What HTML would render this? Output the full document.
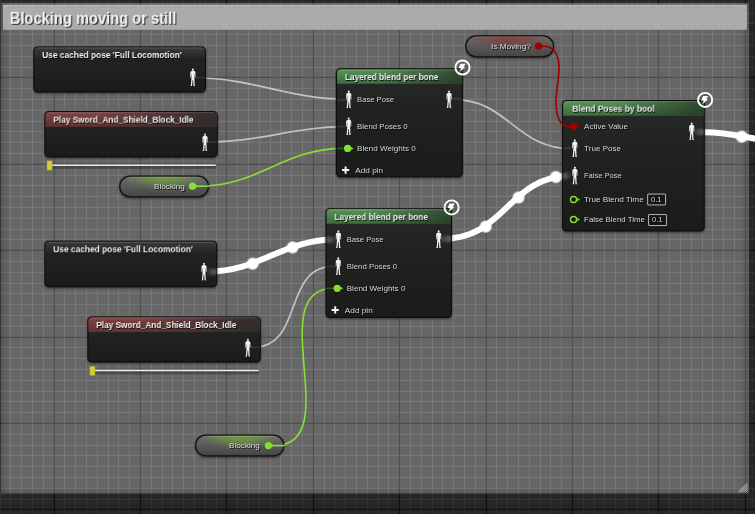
<!DOCTYPE html>
<html lang="en"><head><meta charset="utf-8"><title>Blocking moving or still</title>
<style>
html,body{margin:0;padding:0;background:#262626;}
body{width:755px;height:514px;overflow:hidden;position:relative;font-family:"Liberation Sans",sans-serif;}
svg.scene{position:absolute;left:0;top:0;display:block;}
.t{position:absolute;left:0;top:0;white-space:nowrap;transform-origin:0 0;display:block;will-change:transform;}
.t.lb{text-shadow:0.8px 0.8px 0.6px rgba(0,0,0,0.9);}
.t.ti{font-weight:bold;text-shadow:0.8px 0.8px 0.6px rgba(0,0,0,0.9);}
.t.hd{font-weight:bold;text-shadow:1.3px 1.3px 0.5px rgba(40,40,40,0.95);}
</style></head>
<body>
<svg class="scene" width="755" height="514" viewBox="0 0 755 514">
<defs>
<clipPath id="cb"><rect x="1.0" y="3.0" width="748.0" height="490.5"/></clipPath>
<linearGradient id="edgeL" x1="0" x2="1" y1="0" y2="0"><stop offset="0" stop-color="#000" stop-opacity="0.16"/><stop offset="1" stop-color="#000" stop-opacity="0"/></linearGradient>
<linearGradient id="edgeR" x1="1" x2="0" y1="0" y2="0"><stop offset="0" stop-color="#000" stop-opacity="0.14"/><stop offset="1" stop-color="#000" stop-opacity="0"/></linearGradient>
<linearGradient id="edgeB" x1="0" x2="0" y1="1" y2="0"><stop offset="0" stop-color="#000" stop-opacity="0.14"/><stop offset="1" stop-color="#000" stop-opacity="0"/></linearGradient>
<radialGradient id="bub"><stop offset="0" stop-color="#fff"/><stop offset="0.68" stop-color="#fff"/><stop offset="1" stop-color="#fff" stop-opacity="0"/></radialGradient>
<filter id="sh" x="-10%" y="-20%" width="120%" height="140%"><feGaussianBlur stdDeviation="0.9"/></filter>
<filter id="b1" x="-30%" y="-60%" width="160%" height="220%"><feGaussianBlur stdDeviation="0.8"/></filter>
<linearGradient id="gBody" x1="0" x2="0" y1="0" y2="1"><stop offset="0" stop-color="#282a28"/><stop offset="0.35" stop-color="#212321"/><stop offset="1" stop-color="#1a1c1a"/></linearGradient>
<linearGradient id="gGray" x1="0" x2="0" y1="0" y2="1"><stop offset="0" stop-color="#484848"/><stop offset="0.14" stop-color="#363636"/><stop offset="1" stop-color="#1e1e1e"/></linearGradient>
<linearGradient id="gRed" x1="0" x2="0" y1="0" y2="1"><stop offset="0" stop-color="#8e5353"/><stop offset="0.15" stop-color="#7d3f3f"/><stop offset="1" stop-color="#613232"/></linearGradient>
<linearGradient id="gGreen" x1="0" x2="0" y1="0" y2="1"><stop offset="0" stop-color="#6cab6c"/><stop offset="0.14" stop-color="#528d53"/><stop offset="1" stop-color="#3b6c3d"/></linearGradient>
<linearGradient id="gFade" x1="0" x2="1" y1="0" y2="0"><stop offset="0.35" stop-color="#1c201c" stop-opacity="0"/><stop offset="1" stop-color="#1c201c" stop-opacity="0.62"/></linearGradient>
<linearGradient id="gFadeR" x1="0" x2="1" y1="0" y2="0"><stop offset="0.3" stop-color="#2b2b2b" stop-opacity="0"/><stop offset="0.95" stop-color="#2b2b2b" stop-opacity="0.9"/></linearGradient>
<linearGradient id="gPill" x1="0" x2="0" y1="0" y2="1"><stop offset="0" stop-color="#6c6c6c"/><stop offset="0.45" stop-color="#5b5b5b"/><stop offset="1" stop-color="#454545"/></linearGradient>
<radialGradient id="glG" cx="0.5" cy="0.3" r="0.5"><stop offset="0" stop-color="#78be28" stop-opacity="0.62"/><stop offset="0.45" stop-color="#73b42d" stop-opacity="0.42"/><stop offset="0.78" stop-color="#69a02d" stop-opacity="0.14"/><stop offset="1" stop-color="#64962a" stop-opacity="0"/></radialGradient>
<radialGradient id="glR" cx="0.5" cy="0.3" r="0.5"><stop offset="0" stop-color="#a51414" stop-opacity="0.5"/><stop offset="0.45" stop-color="#961919" stop-opacity="0.33"/><stop offset="0.78" stop-color="#8c1e1e" stop-opacity="0.14"/><stop offset="1" stop-color="#8c1e1e" stop-opacity="0"/></radialGradient>
<linearGradient id="stL" x1="0" x2="1" y1="0" y2="0"><stop offset="0" stop-color="#fff" stop-opacity="0.30"/><stop offset="1" stop-color="#fff" stop-opacity="0.05"/></linearGradient>
<linearGradient id="stR" x1="1" x2="0" y1="0" y2="0"><stop offset="0" stop-color="#fff" stop-opacity="0.30"/><stop offset="1" stop-color="#fff" stop-opacity="0.08"/></linearGradient>
<linearGradient id="gTrack" x1="0" x2="0" y1="0" y2="1"><stop offset="0" stop-color="#000" stop-opacity="0.18"/><stop offset="0.4" stop-color="#000" stop-opacity="0.36"/><stop offset="1" stop-color="#000" stop-opacity="0.22"/></linearGradient>
<g id="person"><ellipse cx="2.75" cy="1.15" rx="0.95" ry="1.15"/><path d="M2.35 2.1L1.0 2.75C0.5 2.95 0.25 3.4 0.22 4L0.2 9.0L0.85 9.3L1.05 5.2L1.2 5.2L1.35 9L1.25 10.4L0.8 16.5L0.2 17.6L1.85 17.6L2.5 11.6L3.0 11.6L3.35 17.6L5.0 17.6L4.5 16.5L4.25 10.4L4.15 9L4.3 5.2L4.45 5.2L4.65 9.3L5.3 9.0L5.28 4C5.25 3.4 5.0 2.95 4.5 2.75L3.15 2.1z"/></g>
<g id="pinF"><circle cx="0" cy="0" r="3.6"/><path d="M3.2 -1.5L6.1 0L3.2 1.5z"/></g>
<g id="bolt"><circle cx="0" cy="0" r="7.05" fill="rgba(20,20,20,0.10)" stroke="#fff" stroke-width="1.9"/><path d="M-2.0 -3.8L3.1 -3.8L1.1 -0.6L2.7 -0.4L-3.0 4.6L-1.4 0.9L-4.0 0.5z" fill="#fff"/></g>
</defs>
<rect width="755" height="514" fill="#262626"/>
<path d="M0.45 0.00V514.00M10.45 0.00V514.00M21.45 0.00V514.00M32.45 0.00V514.00M43.45 0.00V514.00M64.45 0.00V514.00M75.45 0.00V514.00M86.45 0.00V514.00M97.45 0.00V514.00M108.45 0.00V514.00M118.45 0.00V514.00M129.45 0.00V514.00M151.45 0.00V514.00M162.45 0.00V514.00M172.45 0.00V514.00M183.45 0.00V514.00M194.45 0.00V514.00M205.45 0.00V514.00M216.45 0.00V514.00M237.45 0.00V514.00M248.45 0.00V514.00M259.45 0.00V514.00M270.45 0.00V514.00M280.45 0.00V514.00M291.45 0.00V514.00M302.45 0.00V514.00M324.45 0.00V514.00M334.45 0.00V514.00M345.45 0.00V514.00M356.45 0.00V514.00M367.45 0.00V514.00M378.45 0.00V514.00M388.45 0.00V514.00M410.45 0.00V514.00M421.45 0.00V514.00M432.45 0.00V514.00M442.45 0.00V514.00M453.45 0.00V514.00M464.45 0.00V514.00M475.45 0.00V514.00M496.45 0.00V514.00M507.45 0.00V514.00M518.45 0.00V514.00M529.45 0.00V514.00M540.45 0.00V514.00M550.45 0.00V514.00M561.45 0.00V514.00M583.45 0.00V514.00M594.45 0.00V514.00M604.45 0.00V514.00M615.45 0.00V514.00M626.45 0.00V514.00M637.45 0.00V514.00M648.45 0.00V514.00M669.45 0.00V514.00M680.45 0.00V514.00M691.45 0.00V514.00M702.45 0.00V514.00M712.45 0.00V514.00M723.45 0.00V514.00M734.45 0.00V514.00M0.00 2.40H755.00M0.00 13.40H755.00M0.00 23.40H755.00M0.00 34.40H755.00M0.00 45.40H755.00M0.00 56.40H755.00M0.00 67.40H755.00M0.00 88.40H755.00M0.00 99.40H755.00M0.00 110.40H755.00M0.00 121.40H755.00M0.00 131.40H755.00M0.00 142.40H755.00M0.00 153.40H755.00M0.00 175.40H755.00M0.00 185.40H755.00M0.00 196.40H755.00M0.00 207.40H755.00M0.00 218.40H755.00M0.00 229.40H755.00M0.00 239.40H755.00M0.00 261.40H755.00M0.00 272.40H755.00M0.00 283.40H755.00M0.00 293.40H755.00M0.00 304.40H755.00M0.00 315.40H755.00M0.00 326.40H755.00M0.00 347.40H755.00M0.00 358.40H755.00M0.00 369.40H755.00M0.00 380.40H755.00M0.00 391.40H755.00M0.00 401.40H755.00M0.00 412.40H755.00M0.00 434.40H755.00M0.00 445.40H755.00M0.00 455.40H755.00M0.00 466.40H755.00M0.00 477.40H755.00M0.00 488.40H755.00M0.00 499.40H755.00" stroke="#343434" stroke-width="1.15" fill="none"/>
<path d="M54.45 0.00V514.00M140.45 0.00V514.00M226.45 0.00V514.00M313.45 0.00V514.00M399.45 0.00V514.00M486.45 0.00V514.00M572.45 0.00V514.00M658.45 0.00V514.00M745.45 0.00V514.00M0.00 77.40H755.00M0.00 164.40H755.00M0.00 250.40H755.00M0.00 337.40H755.00M0.00 423.40H755.00M0.00 509.40H755.00" stroke="#101010" stroke-width="1.15" fill="none"/>
<rect x="1.0" y="3.0" width="748.0" height="490.5" fill="#666666"/>
<g clip-path="url(#cb)">
<path d="M0.45 3.00V493.50M10.45 3.00V493.50M21.45 3.00V493.50M32.45 3.00V493.50M43.45 3.00V493.50M64.45 3.00V493.50M75.45 3.00V493.50M86.45 3.00V493.50M97.45 3.00V493.50M108.45 3.00V493.50M118.45 3.00V493.50M129.45 3.00V493.50M151.45 3.00V493.50M162.45 3.00V493.50M172.45 3.00V493.50M183.45 3.00V493.50M194.45 3.00V493.50M205.45 3.00V493.50M216.45 3.00V493.50M237.45 3.00V493.50M248.45 3.00V493.50M259.45 3.00V493.50M270.45 3.00V493.50M280.45 3.00V493.50M291.45 3.00V493.50M302.45 3.00V493.50M324.45 3.00V493.50M334.45 3.00V493.50M345.45 3.00V493.50M356.45 3.00V493.50M367.45 3.00V493.50M378.45 3.00V493.50M388.45 3.00V493.50M410.45 3.00V493.50M421.45 3.00V493.50M432.45 3.00V493.50M442.45 3.00V493.50M453.45 3.00V493.50M464.45 3.00V493.50M475.45 3.00V493.50M496.45 3.00V493.50M507.45 3.00V493.50M518.45 3.00V493.50M529.45 3.00V493.50M540.45 3.00V493.50M550.45 3.00V493.50M561.45 3.00V493.50M583.45 3.00V493.50M594.45 3.00V493.50M604.45 3.00V493.50M615.45 3.00V493.50M626.45 3.00V493.50M637.45 3.00V493.50M648.45 3.00V493.50M669.45 3.00V493.50M680.45 3.00V493.50M691.45 3.00V493.50M702.45 3.00V493.50M712.45 3.00V493.50M723.45 3.00V493.50M734.45 3.00V493.50M1.00 2.40H749.00M1.00 13.40H749.00M1.00 23.40H749.00M1.00 34.40H749.00M1.00 45.40H749.00M1.00 56.40H749.00M1.00 67.40H749.00M1.00 88.40H749.00M1.00 99.40H749.00M1.00 110.40H749.00M1.00 121.40H749.00M1.00 131.40H749.00M1.00 142.40H749.00M1.00 153.40H749.00M1.00 175.40H749.00M1.00 185.40H749.00M1.00 196.40H749.00M1.00 207.40H749.00M1.00 218.40H749.00M1.00 229.40H749.00M1.00 239.40H749.00M1.00 261.40H749.00M1.00 272.40H749.00M1.00 283.40H749.00M1.00 293.40H749.00M1.00 304.40H749.00M1.00 315.40H749.00M1.00 326.40H749.00M1.00 347.40H749.00M1.00 358.40H749.00M1.00 369.40H749.00M1.00 380.40H749.00M1.00 391.40H749.00M1.00 401.40H749.00M1.00 412.40H749.00M1.00 434.40H749.00M1.00 445.40H749.00M1.00 455.40H749.00M1.00 466.40H749.00M1.00 477.40H749.00M1.00 488.40H749.00" stroke="#777777" stroke-width="1.15" fill="none"/>
<path d="M54.45 3.00V493.50M140.45 3.00V493.50M226.45 3.00V493.50M313.45 3.00V493.50M399.45 3.00V493.50M486.45 3.00V493.50M572.45 3.00V493.50M658.45 3.00V493.50M745.45 3.00V493.50M1.00 77.40H749.00M1.00 164.40H749.00M1.00 250.40H749.00M1.00 337.40H749.00M1.00 423.40H749.00" stroke="#4f4f4f" stroke-width="1.15" fill="none"/>
<rect x="1.0" y="3.0" width="9" height="490.5" fill="url(#edgeL)"/>
<rect x="740.0" y="3.0" width="9" height="490.5" fill="url(#edgeR)"/>
<rect x="1.0" y="486.5" width="748.0" height="7" fill="url(#edgeB)"/>
</g>
<rect x="3" y="4.9" width="743.9" height="24.9" fill="#ababab"/>
<rect x="3" y="4.9" width="743.9" height="1" fill="#b8b8b8"/>
<path d="M745.80 492.20L747.60 490.40M743.90 492.20L747.60 488.50M742.00 492.20L747.60 486.60M740.10 492.20L747.60 484.70M738.20 492.20L747.60 482.80" stroke="#cfcfcf" stroke-width="0.8" fill="none"/>
<path d="M196.0 78.0C253.1 78.0 288.9 99.2 346.0 99.2" stroke="#d2d2d2" stroke-width="1.70" fill="none" stroke-opacity="0.85"/>
<path d="M208.2 142.1C259.2 142.1 294.6 126.6 345.6 126.6" stroke="#d2d2d2" stroke-width="1.70" fill="none" stroke-opacity="0.85"/>
<path d="M198.7 186.2C259.7 186.2 282.9 148.4 343.9 148.4" stroke="#86e033" stroke-width="1.60" fill="none" stroke-opacity="1.00"/>
<path d="M251.1 347.7C306.3 347.7 280.1 266.2 335.3 266.2" stroke="#d2d2d2" stroke-width="1.70" fill="none" stroke-opacity="0.85"/>
<path d="M274.6 445.6C346.7 445.6 261.5 288.3 333.6 288.3" stroke="#86e033" stroke-width="1.60" fill="none" stroke-opacity="1.00"/>
<path d="M452.3 99.4C508.6 99.4 515.5 148.8 571.8 148.8" stroke="#d2d2d2" stroke-width="1.70" fill="none" stroke-opacity="0.85"/>
<path d="M207.2 271.6C260.6 271.6 282.0 239.6 335.4 239.6" stroke="#fff" stroke-width="6.00" fill="none"/>
<circle cx="252.7" cy="263.7" r="7.0" fill="url(#bub)"/>
<circle cx="292.6" cy="247.4" r="7.0" fill="url(#bub)"/>
<path d="M441.9 238.9C506.3 238.9 507.5 175.8 571.9 175.8" stroke="#fff" stroke-width="6.00" fill="none"/>
<circle cx="485.7" cy="226.6" r="7.0" fill="url(#bub)"/>
<circle cx="518.6" cy="197.5" r="7.0" fill="url(#bub)"/>
<circle cx="555.9" cy="177.0" r="7.0" fill="url(#bub)"/>
<path d="M704.6 132.2C725 132.2 740 136 762 139.8" stroke="#fff" stroke-width="6.1" fill="none"/>
<circle cx="741.9" cy="136.7" r="7.0" fill="url(#bub)"/>
<rect x="33.00" y="46.60" width="173.30" height="47.10" rx="4.60" fill="#000" filter="url(#sh)" opacity="0.45"/>
<rect x="33.30" y="46.40" width="172.70" height="46.10" rx="4.60" fill="#0d0d0d"/>
<rect x="34.45" y="47.55" width="170.40" height="43.80" rx="3.45" fill="url(#gBody)"/>
<path d="M34.45 61.55V51.00Q34.45 47.55 37.90 47.55H201.40Q204.85 47.55 204.85 51.00V61.55z" fill="url(#gGray)"/>
<path d="M37.90 47.95H201.40" stroke="#fff" stroke-opacity="0.13" stroke-width="0.8"/>
<rect x="195.8" y="76.90" width="9.2" height="1.4" fill="#fff" opacity="0.12"/>
<use href="#person" x="190.15" y="68.40" fill="#f2f2f2"/>
<rect x="44.10" y="111.30" width="174.00" height="47.30" rx="4.60" fill="#000" filter="url(#sh)" opacity="0.45"/>
<rect x="44.40" y="111.10" width="173.40" height="46.30" rx="4.60" fill="#0d0d0d"/>
<rect x="45.55" y="112.25" width="171.10" height="44.00" rx="3.45" fill="url(#gBody)"/>
<path d="M45.55 126.65V115.70Q45.55 112.25 49.00 112.25H213.20Q216.65 112.25 216.65 115.70V126.65z" fill="url(#gRed)"/>
<path d="M45.55 126.65V115.70Q45.55 112.25 49.00 112.25H213.20Q216.65 112.25 216.65 115.70V126.65z" fill="url(#gFadeR)"/>
<path d="M49.00 112.65H213.20" stroke="#fff" stroke-opacity="0.13" stroke-width="0.8"/>
<rect x="207.4" y="141.40" width="9.4" height="1.4" fill="#fff" opacity="0.12"/>
<use href="#person" x="202.25" y="133.50" fill="#f2f2f2"/>
<rect x="47.0" y="163.3" width="169.2" height="5.8" rx="1" fill="url(#gTrack)"/>
<rect x="50.4" y="164.45" width="165.4" height="1.5" fill="#f4f4f4"/>
<rect x="47.00" y="160.90" width="5.1" height="9.2" fill="#d6cc3a" stroke="#a39a28" stroke-width="0.5"/>
<rect x="44.10" y="240.90" width="173.40" height="47.60" rx="4.60" fill="#000" filter="url(#sh)" opacity="0.45"/>
<rect x="44.40" y="240.70" width="172.80" height="46.60" rx="4.60" fill="#0d0d0d"/>
<rect x="45.55" y="241.85" width="170.50" height="44.30" rx="3.45" fill="url(#gBody)"/>
<path d="M45.55 255.85V245.30Q45.55 241.85 49.00 241.85H212.60Q216.05 241.85 216.05 245.30V255.85z" fill="url(#gGray)"/>
<path d="M49.00 242.25H212.60" stroke="#fff" stroke-opacity="0.13" stroke-width="0.8"/>
<rect x="206.9" y="268.8" width="9.3" height="6.2" rx="1.5" fill="url(#stR)" filter="url(#b1)"/>
<use href="#person" x="201.25" y="262.70" fill="#f2f2f2"/>
<rect x="87.00" y="316.60" width="174.10" height="47.10" rx="4.60" fill="#000" filter="url(#sh)" opacity="0.45"/>
<rect x="87.30" y="316.40" width="173.50" height="46.10" rx="4.60" fill="#0d0d0d"/>
<rect x="88.45" y="317.55" width="171.20" height="43.80" rx="3.45" fill="url(#gBody)"/>
<path d="M88.45 331.95V321.00Q88.45 317.55 91.90 317.55H256.20Q259.65 317.55 259.65 321.00V331.95z" fill="url(#gRed)"/>
<path d="M88.45 331.95V321.00Q88.45 317.55 91.90 317.55H256.20Q259.65 317.55 259.65 321.00V331.95z" fill="url(#gFadeR)"/>
<path d="M91.90 317.95H256.20" stroke="#fff" stroke-opacity="0.13" stroke-width="0.8"/>
<rect x="250.3" y="346.70" width="9.5" height="1.4" fill="#fff" opacity="0.12"/>
<use href="#person" x="245.15" y="338.80" fill="#f2f2f2"/>
<rect x="89.9" y="368.6" width="169.2" height="5.8" rx="1" fill="url(#gTrack)"/>
<rect x="93.3" y="369.75" width="165.4" height="1.5" fill="#f4f4f4"/>
<rect x="89.90" y="366.20" width="5.1" height="9.2" fill="#d6cc3a" stroke="#a39a28" stroke-width="0.5"/>
<rect x="335.60" y="68.50" width="127.60" height="110.00" rx="4.60" fill="#000" filter="url(#sh)" opacity="0.45"/>
<rect x="335.90" y="68.30" width="127.00" height="109.00" rx="4.60" fill="#0d0d0d"/>
<rect x="337.05" y="69.45" width="124.70" height="106.70" rx="3.45" fill="url(#gBody)"/>
<path d="M337.05 83.75V72.90Q337.05 69.45 340.50 69.45H458.30Q461.75 69.45 461.75 72.90V83.75z" fill="url(#gGreen)"/>
<path d="M337.05 83.75V72.90Q337.05 69.45 340.50 69.45H458.30Q461.75 69.45 461.75 72.90V83.75z" fill="url(#gFade)"/>
<path d="M340.50 69.85H458.30" stroke="#fff" stroke-opacity="0.13" stroke-width="0.8"/>
<use href="#bolt" x="462.50" y="67.50"/>
<rect x="336.9" y="99.20" width="9.5" height="1.4" fill="#fff" opacity="0.12"/>
<rect x="451.4" y="98.20" width="10.5" height="1.4" fill="#fff" opacity="0.12"/>
<rect x="336.9" y="125.90" width="9.0" height="1.4" fill="#fff" opacity="0.12"/>
<rect x="336.9" y="147.70" width="8.0" height="1.4" fill="#86e033" opacity="0.30"/>
<use href="#person" x="346.05" y="90.40" fill="#f2f2f2"/>
<use href="#person" x="446.35" y="90.40" fill="#f2f2f2"/>
<use href="#person" x="345.95" y="117.40" fill="#f2f2f2"/>
<use href="#pinF" x="347.60" y="148.40" fill="#86e033"/>
<path d="M344.60 166.45h2v2.6h2.6v2h-2.6v2.6h-2v-2.6h-2.6v-2h2.6z" fill="#f4f4f4"/>
<rect x="325.20" y="208.40" width="127.10" height="110.80" rx="4.60" fill="#000" filter="url(#sh)" opacity="0.45"/>
<rect x="325.50" y="208.20" width="126.50" height="109.80" rx="4.60" fill="#0d0d0d"/>
<rect x="326.65" y="209.35" width="124.20" height="107.50" rx="3.45" fill="url(#gBody)"/>
<path d="M326.65 223.65V212.80Q326.65 209.35 330.10 209.35H447.40Q450.85 209.35 450.85 212.80V223.65z" fill="url(#gGreen)"/>
<path d="M326.65 223.65V212.80Q326.65 209.35 330.10 209.35H447.40Q450.85 209.35 450.85 212.80V223.65z" fill="url(#gFade)"/>
<path d="M330.10 209.75H447.40" stroke="#fff" stroke-opacity="0.13" stroke-width="0.8"/>
<use href="#bolt" x="451.60" y="207.40"/>
<rect x="326.5" y="236.7" width="9.5" height="6.2" rx="1.5" fill="url(#stL)" filter="url(#b1)"/>
<rect x="441.0" y="235.7" width="10.0" height="6.2" rx="1.5" fill="url(#stR)" filter="url(#b1)"/>
<rect x="326.5" y="265.80" width="9.0" height="1.4" fill="#fff" opacity="0.12"/>
<rect x="326.5" y="287.60" width="8.0" height="1.4" fill="#86e033" opacity="0.30"/>
<use href="#person" x="335.65" y="230.30" fill="#f2f2f2"/>
<use href="#person" x="435.95" y="230.30" fill="#f2f2f2"/>
<use href="#person" x="335.55" y="257.30" fill="#f2f2f2"/>
<use href="#pinF" x="337.20" y="288.30" fill="#86e033"/>
<path d="M334.20 306.35h2v2.6h2.6v2h-2.6v2.6h-2v-2.6h-2.6v-2h2.6z" fill="#f4f4f4"/>
<rect x="119.00" y="175.90" width="90.20" height="22.70" rx="10.90" fill="#000" filter="url(#sh)" opacity="0.5"/>
<rect x="119.20" y="175.60" width="89.80" height="21.80" rx="10.90" fill="#111"/>
<clipPath id="pc1"><rect x="120.40" y="176.80" width="87.40" height="19.40" rx="9.70" fill="#000"/></clipPath>
<rect x="120.40" y="176.80" width="87.40" height="19.40" rx="9.70" fill="url(#gPill)"/>
<g clip-path="url(#pc1)">
<ellipse cx="164.1" cy="182.6" rx="44.9" ry="15.7" fill="url(#glG)"/>
<path d="M126.8 177.20H201.4" stroke="#fff" stroke-opacity="0.2" stroke-width="0.8"/>
</g>
<rect x="195.5" y="185.40" width="14.0" height="1.6" fill="#86e033"/>
<use href="#pinF" x="192.50" y="186.20" fill="#86e033"/>
<rect x="194.80" y="434.90" width="89.70" height="22.80" rx="10.95" fill="#000" filter="url(#sh)" opacity="0.5"/>
<rect x="195.00" y="434.60" width="89.30" height="21.90" rx="10.95" fill="#111"/>
<clipPath id="pc2"><rect x="196.20" y="435.80" width="86.90" height="19.50" rx="9.75" fill="#000"/></clipPath>
<rect x="196.20" y="435.80" width="86.90" height="19.50" rx="9.75" fill="url(#gPill)"/>
<g clip-path="url(#pc2)">
<ellipse cx="239.7" cy="441.6" rx="44.7" ry="15.8" fill="url(#glG)"/>
<path d="M202.7 436.20H276.6" stroke="#fff" stroke-opacity="0.2" stroke-width="0.8"/>
</g>
<rect x="271.4" y="444.80" width="13.4" height="1.6" fill="#86e033"/>
<use href="#pinF" x="268.40" y="445.60" fill="#86e033"/>
<rect x="465.10" y="35.60" width="89.15" height="23.00" rx="11.05" fill="#000" filter="url(#sh)" opacity="0.5"/>
<rect x="465.30" y="35.30" width="88.75" height="22.10" rx="11.05" fill="#111"/>
<clipPath id="pc3"><rect x="466.50" y="36.50" width="86.35" height="19.70" rx="9.85" fill="#000"/></clipPath>
<rect x="466.50" y="36.50" width="86.35" height="19.70" rx="9.85" fill="url(#gPill)"/>
<g clip-path="url(#pc3)">
<ellipse cx="509.7" cy="42.4" rx="44.4" ry="15.9" fill="url(#glR)"/>
<path d="M473.0 36.90H546.3" stroke="#fff" stroke-opacity="0.2" stroke-width="0.8"/>
</g>
<rect x="561.70" y="100.20" width="143.40" height="132.50" rx="4.60" fill="#000" filter="url(#sh)" opacity="0.45"/>
<rect x="562.00" y="100.00" width="142.80" height="131.50" rx="4.60" fill="#0d0d0d"/>
<rect x="563.15" y="101.15" width="140.50" height="129.20" rx="3.45" fill="url(#gBody)"/>
<path d="M563.15 115.75V104.60Q563.15 101.15 566.60 101.15H700.20Q703.65 101.15 703.65 104.60V115.75z" fill="url(#gGreen)"/>
<path d="M563.15 115.75V104.60Q563.15 101.15 566.60 101.15H700.20Q703.65 101.15 703.65 104.60V115.75z" fill="url(#gFade)"/>
<path d="M566.60 101.55H700.20" stroke="#fff" stroke-opacity="0.13" stroke-width="0.8"/>
<use href="#bolt" x="705.15" y="99.90"/>
<rect x="563.0" y="147.60" width="8.0" height="1.4" fill="#fff" opacity="0.12"/>
<rect x="563.0" y="172.8" width="8.0" height="6.2" rx="1.5" fill="url(#stL)" filter="url(#b1)"/>
<rect x="694.5" y="128.9" width="9.3" height="6.2" rx="1.5" fill="url(#stR)" filter="url(#b1)"/>
<use href="#person" x="572.05" y="139.30" fill="#f2f2f2"/>
<use href="#person" x="572.15" y="166.60" fill="#f2f2f2"/>
<use href="#person" x="688.95" y="122.50" fill="#f2f2f2"/>
<circle cx="573.55" cy="199.50" r="3.05" fill="#121212" stroke="#86e033" stroke-width="1.4"/><path d="M577.45 197.70l2.5 1.8l-2.5 1.8z" fill="#86e033"/>
<circle cx="573.55" cy="219.50" r="3.05" fill="#121212" stroke="#86e033" stroke-width="1.4"/><path d="M577.45 217.70l2.5 1.8l-2.5 1.8z" fill="#86e033"/>
<rect x="647.65" y="194.05" width="17.90" height="10.90" rx="0.4" fill="rgba(0,0,0,0.25)" stroke="#c8c8c8" stroke-width="0.9"/>
<rect x="648.55" y="214.55" width="17.90" height="11.00" rx="0.4" fill="rgba(0,0,0,0.25)" stroke="#c8c8c8" stroke-width="0.9"/>
<path d="M538.6 46.2L544.5 46.3C551 46.8 558.6 50 559 67C559.2 80 556 90 556 101C556 116 560 126.4 569 126.4L573.5 126.4" stroke="#a00000" stroke-width="1.6" fill="none"/>
<use href="#pinF" x="538.60" y="46.20" fill="#a00000"/>
<use href="#pinF" x="573.50" y="126.40" fill="#a00000"/>
</svg>
<span class="t ti" style="font-size:9.16px;line-height:9.16px;transform:translate(42.20px,51.00px) scaleX(0.9126);color:#f2f2f2">Use cached pose 'Full Locomotion'</span>
<span class="t ti" style="font-size:9.16px;line-height:9.16px;transform:translate(53.40px,115.70px) scaleX(0.9000);color:#f2f2f2">Play Sword_And_Shield_Block_Idle</span>
<span class="t ti" style="font-size:9.16px;line-height:9.16px;transform:translate(53.30px,245.30px) scaleX(0.9126);color:#f2f2f2">Use cached pose 'Full Locomotion'</span>
<span class="t ti" style="font-size:9.16px;line-height:9.16px;transform:translate(96.30px,321.00px) scaleX(0.9000);color:#f2f2f2">Play Sword_And_Shield_Block_Idle</span>
<span class="t ti" style="font-size:9.16px;line-height:9.16px;transform:translate(344.90px,73.00px) scaleX(0.9049);color:#f2f2f2">Layered blend per bone</span>
<span class="t lb" style="font-size:7.56px;line-height:7.56px;transform:translate(357.10px,96.00px) scaleX(1.0092);color:#d8d8d8">Base Pose</span>
<span class="t lb" style="font-size:7.56px;line-height:7.56px;transform:translate(357.10px,122.90px) scaleX(1.0379);color:#d8d8d8">Blend Poses 0</span>
<span class="t lb" style="font-size:7.56px;line-height:7.56px;transform:translate(357.10px,144.80px) scaleX(1.0708);color:#d8d8d8">Blend Weights 0</span>
<span class="t lb" style="font-size:7.56px;line-height:7.56px;transform:translate(355.20px,166.80px) scaleX(1.0920);color:#d8d8d8">Add pin</span>
<span class="t ti" style="font-size:9.16px;line-height:9.16px;transform:translate(334.50px,212.90px) scaleX(0.9049);color:#f2f2f2">Layered blend per bone</span>
<span class="t lb" style="font-size:7.56px;line-height:7.56px;transform:translate(346.70px,235.90px) scaleX(1.0092);color:#d8d8d8">Base Pose</span>
<span class="t lb" style="font-size:7.56px;line-height:7.56px;transform:translate(346.70px,262.80px) scaleX(1.0379);color:#d8d8d8">Blend Poses 0</span>
<span class="t lb" style="font-size:7.56px;line-height:7.56px;transform:translate(346.70px,284.70px) scaleX(1.0708);color:#d8d8d8">Blend Weights 0</span>
<span class="t lb" style="font-size:7.56px;line-height:7.56px;transform:translate(344.80px,306.70px) scaleX(1.0920);color:#d8d8d8">Add pin</span>
<span class="t lb" style="font-size:7.70px;line-height:7.70px;transform:translate(154.10px,183.20px) scaleX(1.0583);color:#dedede">Blocking</span>
<span class="t lb" style="font-size:7.70px;line-height:7.70px;transform:translate(229.10px,442.30px) scaleX(1.0583);color:#dedede">Blocking</span>
<span class="t lb" style="font-size:7.70px;line-height:7.70px;transform:translate(491.10px,43.20px) scaleX(1.0689);color:#dedede">Is Moving?</span>
<span class="t ti" style="font-size:9.16px;line-height:9.16px;transform:translate(572.30px,104.70px) scaleX(0.9135);color:#f2f2f2">Blend Poses by bool</span>
<span class="t lb" style="font-size:7.56px;line-height:7.56px;transform:translate(584.10px,123.00px) scaleX(1.0612);color:#d8d8d8">Active Value</span>
<span class="t lb" style="font-size:7.56px;line-height:7.56px;transform:translate(584.10px,144.70px) scaleX(1.0695);color:#d8d8d8">True Pose</span>
<span class="t lb" style="font-size:7.56px;line-height:7.56px;transform:translate(584.10px,172.00px) scaleX(0.9995);color:#d8d8d8">False Pose</span>
<span class="t lb" style="font-size:7.56px;line-height:7.56px;transform:translate(584.10px,195.90px) scaleX(1.0818);color:#d8d8d8">True Blend Time</span>
<span class="t lb" style="font-size:7.56px;line-height:7.56px;transform:translate(584.10px,215.95px) scaleX(1.0427);color:#d8d8d8">False Blend Time</span>
<span class="t lb" style="font-size:6.83px;line-height:6.83px;transform:translate(650.90px,196.90px) scaleX(1.1269);color:#d8d8d8">0.1</span>
<span class="t lb" style="font-size:6.83px;line-height:6.83px;transform:translate(651.90px,216.90px) scaleX(1.1269);color:#d8d8d8">0.1</span>
<span class="t hd" style="font-size:16.86px;line-height:16.86px;transform:translate(9.80px,10.80px) scaleX(0.8713);color:#f4f4f4">Blocking moving or still</span>
</body></html>
